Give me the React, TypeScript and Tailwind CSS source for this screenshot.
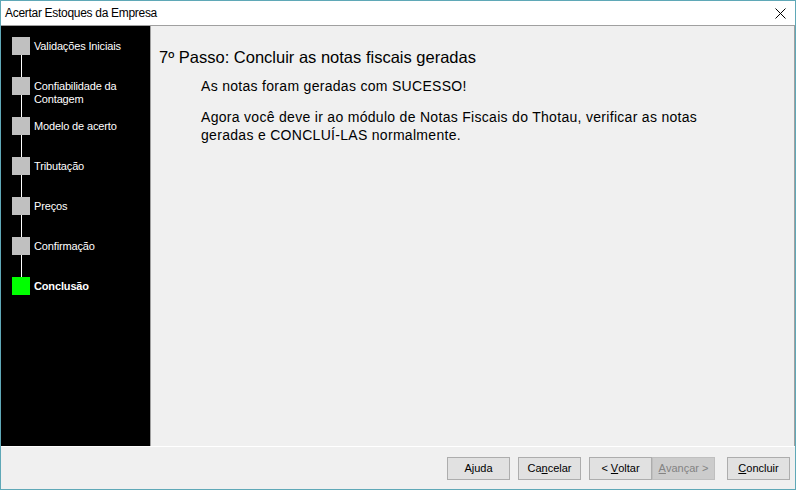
import type { ReactNode } from "react";

type Step = { id: string; label: ReactNode; current?: boolean };

const STEPS: Step[] = [
  { id: "validacoes", label: "Validações Iniciais" },
  { id: "confiabilidade", label: <>Confiabilidade da<br />Contagem</> },
  { id: "modelo", label: "Modelo de acerto" },
  { id: "tributacao", label: "Tributação" },
  { id: "precos", label: "Preços" },
  { id: "confirmacao", label: "Confirmação" },
  { id: "conclusao", label: "Conclusão", current: true },
];

function StepItem({ step, last }: { step: Step; last: boolean }) {
  return (
    <div className={["flex gap-[4px]", last ? "h-[18px]" : "h-[40px]"].join(" ")}>
      <div className="flex w-[18px] shrink-0 flex-col items-center">
        <div className={["h-[18px] w-[18px] shrink-0", step.current ? "bg-[#00ff00]" : "bg-[#c0c0c0]"].join(" ")} />
        {!last && <div className="w-px flex-1 bg-white" />}
      </div>
      <div
        className={[
          "pt-[3px] text-[11px] leading-[13px] tracking-[-0.15px] whitespace-nowrap text-white",
          step.current ? "font-bold" : "",
        ].join(" ")}
      >
        {step.label}
      </div>
    </div>
  );
}

function WizButton({ children, disabled }: { children: ReactNode; disabled?: boolean }) {
  return (
    <button
      type="button"
      disabled={disabled}
      className={[
        "flex h-[23px] w-[63px] items-center justify-center border text-[11px] leading-none whitespace-pre",
        disabled
          ? "border-[#bfbfbf] bg-[#cccccc] text-[#838383]"
          : "border-[#adadad] bg-[#e1e1e1] text-black",
      ].join(" ")}
    >
      {children}
    </button>
  );
}

export default function App() {
  return (
    <div className="flex h-[490px] w-[796px] flex-col border border-[#5fa8b7] bg-[#f0f0f0] font-['Liberation_Sans',Arial,sans-serif] text-black">
      {/* title bar */}
      <div className="flex h-[25px] shrink-0 items-center justify-between border-b border-[#a0a0a0] bg-white pl-[4px] pr-[8px]">
        <span className="text-[12px] tracking-[-0.3px]">Acertar Estoques da Empresa</span>
        <svg width="11" height="11" viewBox="0 0 11 11" className="mr-[1px]">
          <path d="M0.5 0.5 L10.5 10.5 M10.5 0.5 L0.5 10.5" stroke="#000" strokeWidth="1" fill="none" />
        </svg>
      </div>

      <div className="flex min-h-0 flex-1 border-b border-white">
        <aside className="w-[150px] shrink-0 border-r border-[#a0a0a0] bg-black pl-[11px] pt-[11px]">
          {STEPS.map((s, i) => (
            <StepItem key={s.id} step={s} last={i === STEPS.length - 1} />
          ))}
        </aside>

        <main className="flex-1 border-r border-[#a0a0a0] pl-[8px] pt-[21px]">
          <h1 className="text-[16.5px] leading-[20px]">7º Passo: Concluir as notas fiscais geradas</h1>
          <div className="ml-[42px] mt-[10px] text-[14px] leading-[18px] tracking-[0.3px]">
            <p>As notas foram geradas com SUCESSO!</p>
            <p className="mt-[13px]">
              Agora você deve ir ao módulo de Notas Fiscais do Thotau, verificar as notas
              <br />
              geradas e CONCLUÍ-LAS normalmente.
            </p>
          </div>
        </main>
      </div>

      <footer className="flex h-[42px] shrink-0 items-start justify-end pr-[5px] pt-[10px]">
        <WizButton>
          A<span className="underline">j</span>uda
        </WizButton>
        <div className="ml-[8px]">
          <WizButton>
            Ca<span className="underline">n</span>celar
          </WizButton>
        </div>
        <div className="ml-[8px]">
          <WizButton>
            {"< "}
            <span className="underline">V</span>oltar
          </WizButton>
        </div>
        <WizButton disabled>
          <span className="underline">A</span>
          {"vançar >"}
        </WizButton>
        <div className="ml-[12px]">
          <WizButton>
            <span className="underline">C</span>oncluir
          </WizButton>
        </div>
      </footer>
    </div>
  );
}
